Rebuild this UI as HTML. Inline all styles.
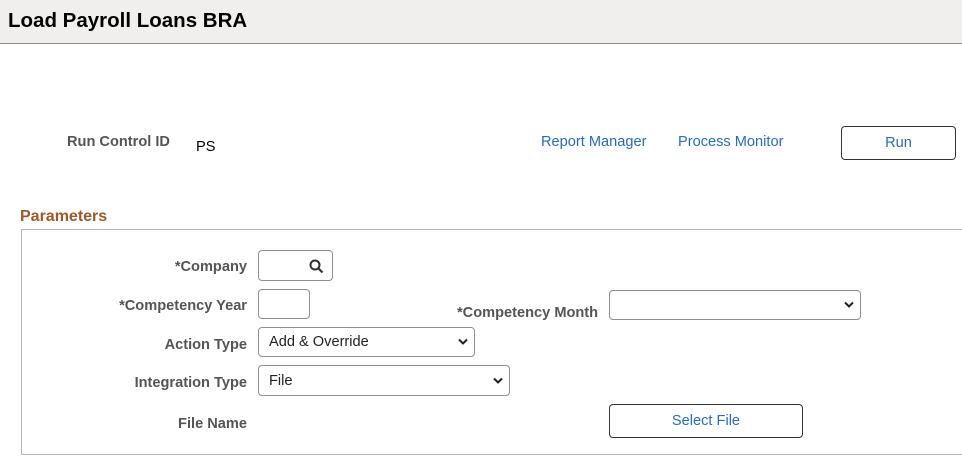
<!DOCTYPE html>
<html><head><style>
body{margin:0;width:962px;height:465px;background:#fff;position:relative;overflow:hidden;font-family:"Liberation Sans",Arial,sans-serif;}
.a{position:absolute;}
.hdr{left:0;top:0;width:962px;height:43px;background:#f0efee;border-bottom:1px solid #8a8a8a;}
.title{left:8px;top:9px;font-size:20.5px;font-weight:bold;color:#000;}
.lbl{font-size:14.6px;font-weight:bold;color:#555;text-align:right;width:240px;left:7px;}
.link{font-size:14.6px;color:#2a6bb7;}
.box{border:1px solid #8f8f8f;border-radius:4px;background:#fff;box-sizing:border-box;}
.sel{font-size:14.6px;color:#222;}
.chev{position:absolute;right:6px;top:50%;margin-top:-4px;}
.btn{border:1px solid #333;border-radius:4px;box-sizing:border-box;text-align:center;color:#2a6bb7;font-size:14.6px;}
</style></head><body>
<div class="a hdr"></div>
<div class="a title">Load Payroll Loans BRA</div>
<div class="a" style="left:67px;top:134px;font-size:14.6px;font-weight:bold;color:#555">Run Control ID</div>
<div class="a" style="left:196px;top:139px;font-size:14.6px;color:#000">PS</div>
<div class="a link" style="left:541px;top:134px">Report Manager</div>
<div class="a link" style="left:678px;top:134px">Process Monitor</div>
<div class="a btn" style="left:841px;top:126px;width:115px;height:34px;line-height:32px">Run</div>
<div class="a" style="left:20px;top:208px;font-size:16px;font-weight:bold;color:#9c5a2a">Parameters</div>
<div class="a" style="left:21px;top:229px;width:950px;height:226px;border:1px solid #b8b8b8;box-sizing:border-box"></div>
<div class="a lbl" style="top:259px">*Company</div>
<div class="a box" style="left:258px;top:250px;width:75px;height:31px"><svg class="a" style="left:50px;top:8px" width="15" height="15" viewBox="0 0 15 15"><circle cx="6" cy="6" r="4.5" fill="none" stroke="#333" stroke-width="2"/><line x1="9.5" y1="9.5" x2="13.5" y2="13.5" stroke="#333" stroke-width="2.2"/></svg></div>
<div class="a lbl" style="top:298px">*Competency Year</div>
<div class="a box" style="left:258px;top:289px;width:52px;height:30px"></div>
<div class="a" style="left:457px;top:305px;font-size:14.6px;font-weight:bold;color:#555">*Competency Month</div>
<div class="a box" style="left:609px;top:290px;width:252px;height:30px"><svg class="chev" width="10" height="7" viewBox="0 0 10 7"><path d="M1 1.5L5 5.5L9 1.5" fill="none" stroke="#222" stroke-width="2"/></svg></div>
<div class="a lbl" style="top:337px">Action Type</div>
<div class="a box sel" style="left:258px;top:327px;width:217px;height:30px"><span class="a" style="left:10px;top:6px">Add &amp; Override</span><svg class="chev" width="10" height="7" viewBox="0 0 10 7"><path d="M1 1.5L5 5.5L9 1.5" fill="none" stroke="#222" stroke-width="2"/></svg></div>
<div class="a lbl" style="top:375px">Integration Type</div>
<div class="a box sel" style="left:258px;top:365px;width:252px;height:31px"><span class="a" style="left:10px;top:7px">File</span><svg class="chev" width="10" height="7" viewBox="0 0 10 7"><path d="M1 1.5L5 5.5L9 1.5" fill="none" stroke="#222" stroke-width="2"/></svg></div>
<div class="a lbl" style="top:416px">File Name</div>
<div class="a btn" style="left:609px;top:404px;width:194px;height:34px;line-height:32px">Select File</div>
</body></html>
